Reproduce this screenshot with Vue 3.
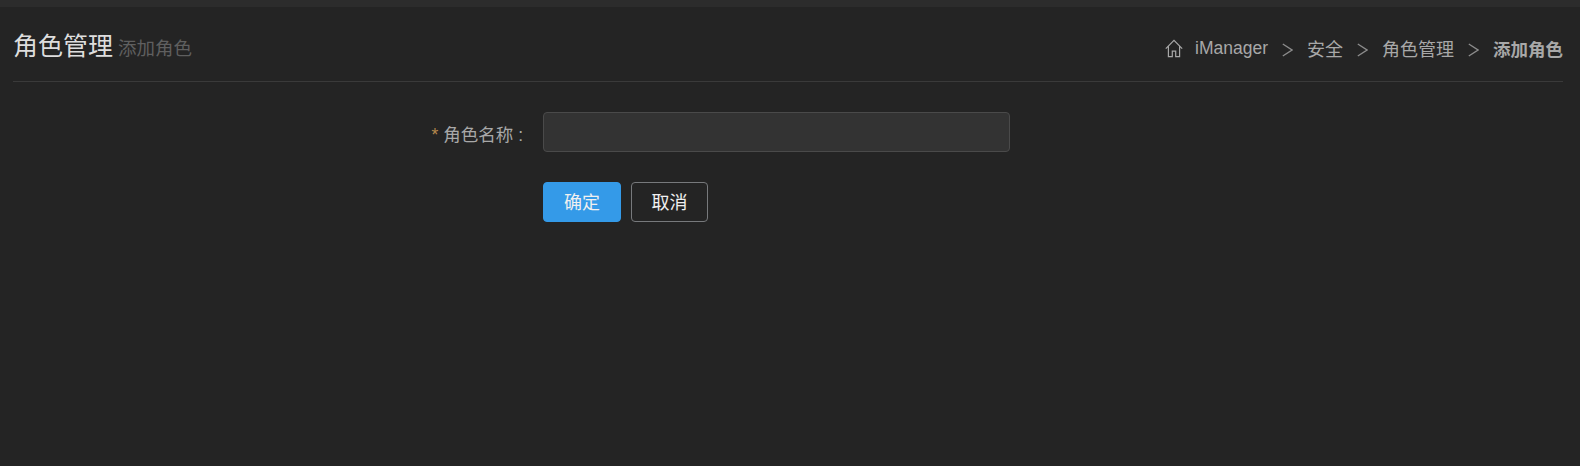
<script setup>
import { ref } from 'vue';

const roleName = ref('');
const crumbs = [
    { text: 'iManager', latin: true },
    { text: '安全' },
    { text: '角色管理' },
];
</script>

<template>
    <div class="page">
        <div class="top-strip"></div>
        <div class="content">
            <div class="page-header">
                <div class="page-title">
                    <h1>角色管理</h1>
                    <small>添加角色</small>
                </div>
                <ul class="breadcrumb">
                    <li class="home">
                        <svg width="18" height="19" viewBox="0 0 18 19" fill="none" stroke="currentColor" stroke-width="1.2">
                            <path d="M.8 9.6 9 1.4l8.2 8.2M3.4 7.4v10.2h3.9v-5.4h3.4v5.4h3.9V7.4" />
                        </svg>
                    </li>
                    <template v-for="item in crumbs" :key="item.text">
                        <li :class="{ latin: item.latin }">{{ item.text }}</li>
                        <li class="sep">
                            <svg width="11" height="14" viewBox="0 0 11 14" fill="none" stroke="currentColor" stroke-width="1.4">
                                <path d="M.8 1 10 7 .8 13" />
                            </svg>
                        </li>
                    </template>
                    <li class="active">添加角色</li>
                </ul>
            </div>
            <form class="role-form" @submit.prevent>
                <div class="form-row">
                    <label class="form-label"><span class="required">*</span> 角色名称 :</label>
                    <input v-model="roleName" class="form-input" type="text" />
                </div>
                <div class="form-actions">
                    <button type="submit" class="btn btn-primary">确定</button>
                    <button type="button" class="btn btn-default">取消</button>
                </div>
            </form>
        </div>
    </div>
</template>

<style scoped>
.page {
    width: 1580px;
    height: 466px;
    overflow: hidden;
    background: #242424;
    font-family: "Liberation Sans", "Noto Sans CJK SC", sans-serif;
}

.top-strip {
    height: 7px;
    background: #2c2c2c;
}

.content {
    padding: 0 17px 0 13px;
}

.page-header {
    height: 75px;
    box-sizing: border-box;
    border-bottom: 1px solid #3a3a3a;
    display: flex;
    justify-content: space-between;
    align-items: center;
    padding-top: 8px;
}

.page-title {
    display: flex;
    align-items: baseline;
    gap: 5px;
    margin-bottom: 9px;
}

.page-title h1 {
    margin: 0;
    font-size: 25px;
    font-weight: 400;
    color: #dedede;
}

.page-title small {
    font-size: 18.5px;
    color: #5f5f5f;
}

.breadcrumb {
    list-style: none;
    margin: 0;
    padding: 0;
    display: flex;
    align-items: center;
    gap: 14px;
    font-size: 18px;
    color: #a8a8a8;
}

.breadcrumb li {
    display: flex;
    align-items: center;
}

.breadcrumb .home {
    margin-right: -2px;
}

.breadcrumb .latin {
    font-size: 17.5px;
}

.breadcrumb .sep {
    margin-top: 4px;
    color: #8c8c8c;
}

.breadcrumb .active {
    font-size: 17.5px;
    font-weight: 700;
}

.role-form {
    padding-top: 30px;
}

.form-row {
    display: flex;
    align-items: center;
}

.form-label {
    width: 530px;
    padding: 2px 20px 0 0;
    box-sizing: border-box;
    text-align: right;
    font-size: 17.5px;
    color: #a8a8a8;
}

.required {
    color: #b5894d;
}

.form-input {
    width: 467px;
    height: 40px;
    box-sizing: border-box;
    background: #333;
    border: 1px solid #4a4a4a;
    border-radius: 4px;
    color: #ddd;
    outline: none;
}

.form-actions {
    margin-top: 30px;
    margin-left: 530px;
    display: flex;
    gap: 10px;
}

.btn {
    height: 40px;
    box-sizing: border-box;
    padding-bottom: 3px;
    border-radius: 4px;
    font-family: inherit;
    font-size: 18px;
    color: #f0f0f0;
    cursor: pointer;
}

.btn-primary {
    width: 78px;
    background: #349ae8;
    border: 1px solid #349ae8;
}

.btn-default {
    width: 77px;
    background: transparent;
    border: 1px solid #77797c;
}
</style>
